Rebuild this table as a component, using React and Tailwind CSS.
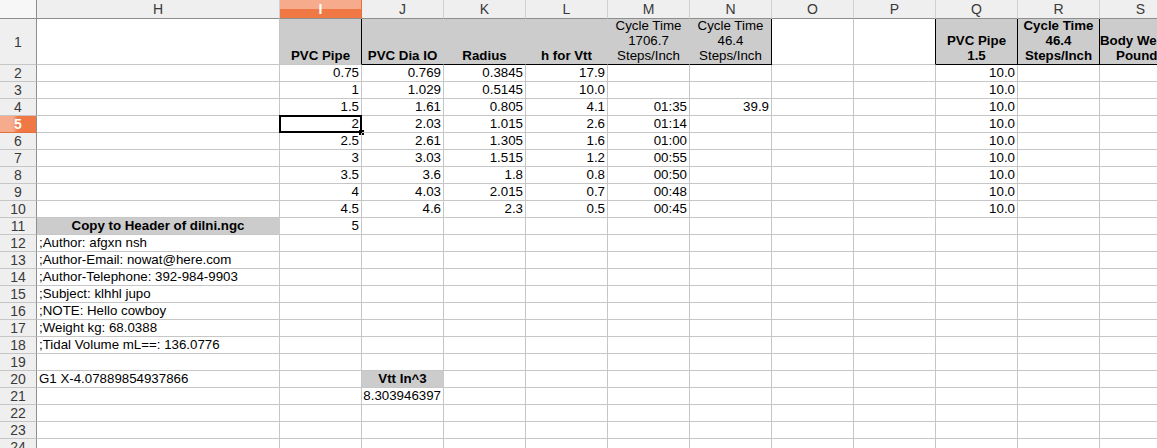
import React from 'react';

const COLS = ['H', 'I', 'J', 'K', 'L', 'M', 'N', 'O', 'P', 'Q', 'R', 'S'];

// body rows 2..24, values keyed by column letter
const rows = {
  2: { I: '0.75', J: '0.769', K: '0.3845', L: '17.9', Q: '10.0' },
  3: { I: '1', J: '1.029', K: '0.5145', L: '10.0', Q: '10.0' },
  4: { I: '1.5', J: '1.61', K: '0.805', L: '4.1', M: '01:35', N: '39.9', Q: '10.0' },
  5: { I: '2', J: '2.03', K: '1.015', L: '2.6', M: '01:14', Q: '10.0' },
  6: { I: '2.5', J: '2.61', K: '1.305', L: '1.6', M: '01:00', Q: '10.0' },
  7: { I: '3', J: '3.03', K: '1.515', L: '1.2', M: '00:55', Q: '10.0' },
  8: { I: '3.5', J: '3.6', K: '1.8', L: '0.8', M: '00:50', Q: '10.0' },
  9: { I: '4', J: '4.03', K: '2.015', L: '0.7', M: '00:48', Q: '10.0' },
  10: { I: '4.5', J: '4.6', K: '2.3', L: '0.5', M: '00:45', Q: '10.0' },
  11: { I: '5' },
  12: { H: ';Author: afgxn nsh' },
  13: { H: ';Author-Email: nowat@here.com' },
  14: { H: ';Author-Telephone: 392-984-9903' },
  15: { H: ';Subject: klhhl jupo' },
  16: { H: ';NOTE: Hello cowboy' },
  17: { H: ';Weight kg: 68.0388' },
  18: { H: ';Tidal Volume mL==: 136.0776' },
  20: { H: 'G1 X-4.07889854937866' },
  21: { J: '8.303946397' },
};

// gray bold label cells in body
const labels = {
  '11H': 'Copy to Header of dilni.ngc',
  '20J': 'Vtt In^3',
};

const header = {
  I: { lines: ['PVC Pipe'], bold: true, cls: 'border-r-black' },
  J: { lines: ['PVC Dia IO'], bold: true, cls: 'border-b-black border-r-[#cccccc]' },
  K: { lines: ['Radius'], bold: true, cls: 'border-b-black border-r-[#cccccc]' },
  L: { lines: ['h for Vtt'], bold: true, cls: 'border-b-black border-r-[#cccccc]' },
  M: { lines: ['Cycle Time', '1706.7', 'Steps/Inch'], bold: false, cls: 'border-b-black border-r-[#cccccc]' },
  N: { lines: ['Cycle Time', '46.4', 'Steps/Inch'], bold: false, cls: 'border-b-black border-r-black' },
  Q: { lines: ['PVC Pipe', '1.5'], bold: true, cls: 'border-b-black border-r-black' },
  R: { lines: ['Cycle Time', '46.4', 'Steps/Inch'], bold: true, cls: 'border-b-black border-r-black' },
  S: { lines: ['Body Weight', 'Pounds'], bold: true, cls: 'border-b-black border-r-black' },
};

const HeaderRow = () => (
  <>
    <div className="bg-[#f7f7f7] border-r border-b border-r-[#8e8e8e] border-b-[#8e8e8e]" />
    {COLS.map((c) =>
      c === 'I' ? (
        <div
          key={c}
          className="flex items-center justify-center border-r border-b border-r-[#e07040] border-b-[#8e8e8e] bg-[linear-gradient(to_bottom,#f6ab8d_50%,#ef7844_50%)] text-white text-[14px] font-bold"
        >
          {c}
        </div>
      ) : (
        <div
          key={c}
          className="flex items-center justify-center border-r border-b border-r-[#cfcfcf] border-b-[#8e8e8e] bg-[#efefef] text-[#3a3a3a] text-[14px]"
        >
          {c}
        </div>
      )
    )}
  </>
);

const RowHead = ({ n }) =>
  n === 5 ? (
    <div className="flex items-center justify-center border-r border-b border-r-[#8e8e8e] border-b-[#e07040] bg-[linear-gradient(to_right,#f6ab8d_35%,#ef7844_50%)] text-white text-[14px] font-bold leading-[16px]">
      {n}
    </div>
  ) : (
    <div className="flex items-center justify-center border-r border-b border-r-[#8e8e8e] border-b-[#c6c6c6] bg-[#efefef] text-[#3a3a3a] text-[14px] leading-[16px]">
      {n}
    </div>
  );

const FirstRow = () => (
  <>
    <RowHead n={1} />
    {COLS.map((c) => {
      const h = header[c];
      if (!h) {
        const edge = c === 'P' ? 'border-r-black' : 'border-r-[#c6c6c6]';
        return <div key={c} className={`border-r border-b border-b-[#c6c6c6] ${edge}`} />;
      }
      return (
        <div
          key={c}
          className={`flex flex-col justify-end items-center whitespace-nowrap overflow-visible bg-[#cccccc] border-r border-b border-b-[#c6c6c6] text-black leading-[15px] pb-[1px] ${h.bold ? 'font-bold' : ''} ${h.cls}`}
        >
          {h.lines.map((l, i) => (
            <span key={i}>{l}</span>
          ))}
        </div>
      );
    })}
  </>
);

const BodyRow = ({ n }) => {
  const data = rows[n] || {};
  return (
    <>
      <RowHead n={n} />
      {COLS.map((c) => {
        const label = labels[`${n}${c}`];
        if (label) {
          return (
            <div
              key={c}
              className="flex items-center justify-center bg-[#cccccc] border-r border-b border-[#cccccc] border-b-[#c6c6c6] font-bold leading-[16px] whitespace-nowrap"
            >
              {label}
            </div>
          );
        }
        const v = data[c];
        const left = c === 'H';
        return (
          <div
            key={c}
            className={`relative border-r border-b border-[#c6c6c6] leading-[16px] whitespace-nowrap ${left ? 'pl-[2px] text-left' : 'pr-[2px] text-right'}`}
          >
            {v}
            {n === 5 && c === 'I' && (
              <>
                <div className="absolute -left-[1px] -top-[1px] w-[83px] h-[18px] border-2 border-black" />
                <div className="absolute -right-[3px] -bottom-[3px] w-[5px] h-[5px] bg-black" />
              </>
            )}
          </div>
        );
      })}
    </>
  );
};

export default function App() {
  const body = Array.from({ length: 23 }, (_, i) => i + 2);
  return (
    <div className="w-[1157px] h-[448px] overflow-hidden bg-white font-['Liberation_Sans',Arial,sans-serif] text-[13.3px] text-black">
      <div className="grid grid-cols-[37px_243px_repeat(11,82px)] grid-rows-[19px_46px_repeat(23,17px)] w-[1182px]">
        <HeaderRow />
        <FirstRow />
        {body.map((n) => (
          <BodyRow key={n} n={n} />
        ))}
      </div>
    </div>
  );
}
